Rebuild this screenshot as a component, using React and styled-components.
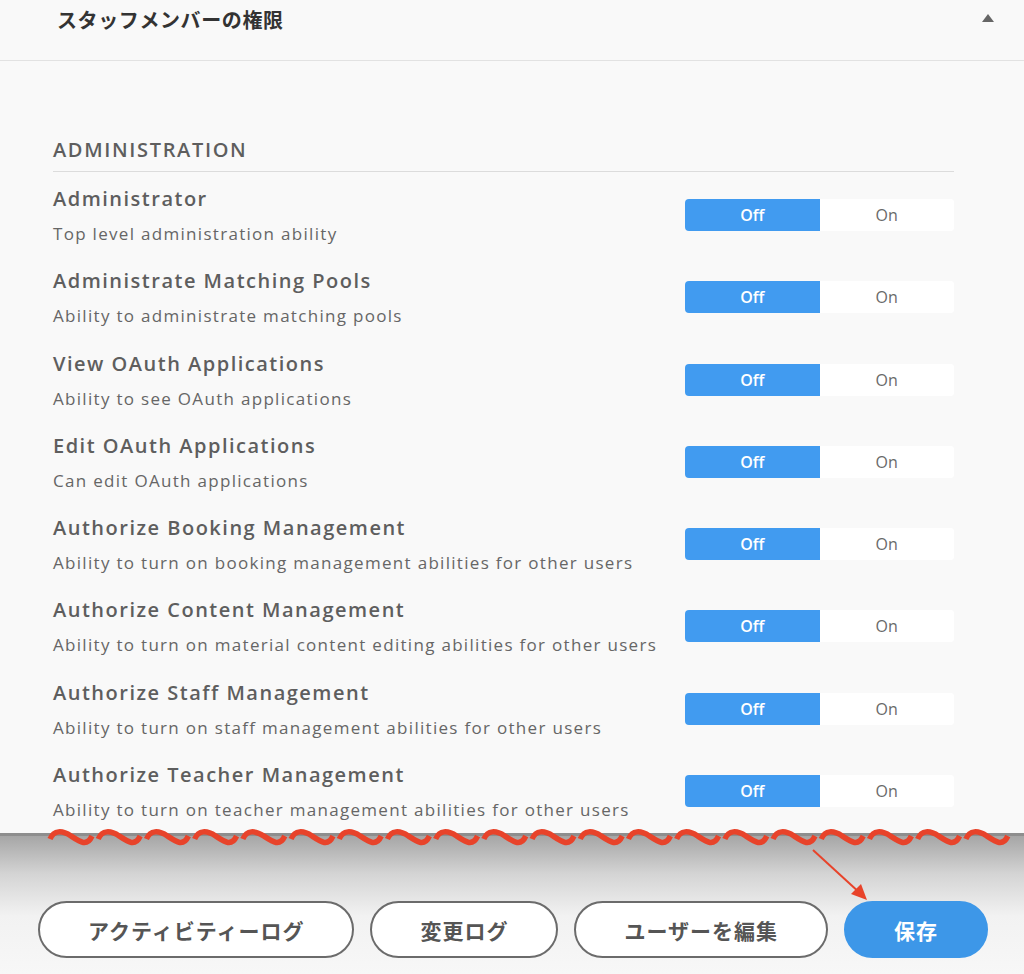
import React from "react";
import styled, { createGlobalStyle } from "styled-components";

const permissions = [
  ["Administrator", "Top level administration ability"],
  ["Administrate Matching Pools", "Ability to administrate matching pools"],
  ["View OAuth Applications", "Ability to see OAuth applications"],
  ["Edit OAuth Applications", "Can edit OAuth applications"],
  ["Authorize Booking Management", "Ability to turn on booking management abilities for other users"],
  ["Authorize Content Management", "Ability to turn on material content editing abilities for other users"],
  ["Authorize Staff Management", "Ability to turn on staff management abilities for other users"],
  ["Authorize Teacher Management", "Ability to turn on teacher management abilities for other users"],
];

function Wave() {
  const segs = [];
  for (let i = 0; i < 20; i++) {
    const x = 50 + i * 48.2;
    segs.push(
      <path
        key={i}
        d={`M${x} 2 C${x + 4} -7, ${x + 12} -7, ${x + 21} -1 S${x + 37} 10, ${x + 42} -1`}
      />
    );
  }
  return (
    <WaveSvg width="1024" height="20" viewBox="0 -10 1024 20">
      <g fill="none" stroke="#e8432a" strokeWidth="5.5" strokeLinecap="butt">
        {segs}
      </g>
    </WaveSvg>
  );
}

function Arrow() {
  return (
    <ArrowSvg width="70" height="70" viewBox="0 0 70 70">
      <line x1="2" y1="2" x2="50" y2="46" stroke="#e8432a" strokeWidth="2" />
      <polygon points="56,52 40,46 50,36" fill="#e8432a" />
    </ArrowSvg>
  );
}

function Toggle({ on }) {
  return (
    <ToggleBox>
      <ToggleHalf active={!on}>Off</ToggleHalf>
      <ToggleHalf active={on}>On</ToggleHalf>
    </ToggleBox>
  );
}

export default function App() {
  return (
    <>
      <GlobalStyle />
      <Panel>
        <Header>
          <HeaderTitle>スタッフメンバーの権限</HeaderTitle>
          <Caret />
        </Header>
        <Content>
          <SectionLabel>ADMINISTRATION</SectionLabel>
          {permissions.map(([title, desc]) => (
            <Row key={title}>
              <RowText>
                <RowTitle>{title}</RowTitle>
                <RowDesc>{desc}</RowDesc>
              </RowText>
              <Toggle on={false} />
            </Row>
          ))}
        </Content>
      </Panel>
      <Footer>
        <Wave />
        <Arrow />
        <ButtonBar>
          <OutlineButton>アクティビティーログ</OutlineButton>
          <OutlineButton>変更ログ</OutlineButton>
          <OutlineButton>ユーザーを編集</OutlineButton>
          <SaveButton>保存</SaveButton>
        </ButtonBar>
      </Footer>
    </>
  );
}

const GlobalStyle = createGlobalStyle`
  body {
    margin: 0;
    background: #f7f7f7;
    font-family: "Open Sans", "Noto Sans CJK JP", sans-serif;
  }
`;

const Panel = styled.div`
  background: #f9f9f9;
  border-bottom: 3px solid #8e8e8e;
  height: 836px;
  box-sizing: border-box;
`;

const Header = styled.div`
  height: 61px;
  box-sizing: border-box;
  border-bottom: 1px solid #e2e2e2;
  display: flex;
  justify-content: space-between;
  align-items: flex-start;
  padding: 6px 30px 0 57px;
`;

const HeaderTitle = styled.h2`
  margin: 0;
  font-family: "Noto Sans CJK JP", sans-serif;
  font-size: 20px;
  font-weight: 700;
  letter-spacing: 0.6px;
  line-height: 28px;
  color: #333;
`;

const Caret = styled.span`
  margin-top: 8px;
  width: 0;
  height: 0;
  border-left: 6px solid transparent;
  border-right: 6px solid transparent;
  border-bottom: 8px solid #666;
`;

const Content = styled.div`
  padding: 75px 70px 0 53px;
`;

const SectionLabel = styled.div`
  font-size: 20px;
  font-weight: 600;
  letter-spacing: 1.65px;
  color: #5e5e5e;
  line-height: 28px;
  padding-bottom: 7px;
  border-bottom: 1px solid #dcdcdc;
  margin-bottom: 13px;
`;

const Row = styled.div`
  display: flex;
  justify-content: space-between;
  align-items: flex-start;
  height: 82.3px;
  box-sizing: border-box;
`;

const RowText = styled.div`
  display: flex;
  flex-direction: column;
  gap: 8px;
`;

const RowTitle = styled.div`
  font-size: 20px;
  font-weight: 600;
  letter-spacing: 1.5px;
  line-height: 28px;
  color: #5e5e5e;
`;

const RowDesc = styled.div`
  font-size: 17px;
  letter-spacing: 1.3px;
  line-height: 26px;
  color: #666;
`;

const ToggleBox = styled.div`
  display: flex;
  width: 269px;
  height: 32px;
  margin-top: 14px;
  border-radius: 4px;
  overflow: hidden;
  background: #fff;
`;

const ToggleHalf = styled.div`
  flex: 1;
  display: flex;
  align-items: center;
  justify-content: center;
  font-size: 16px;
  font-weight: ${(p) => (p.active ? 600 : 500)};
  background: ${(p) => (p.active ? "#419bf0" : "#fff")};
  color: ${(p) => (p.active ? "#fff" : "#6a6a6a")};
`;

const Footer = styled.div`
  position: relative;
  height: 138px;
  background: linear-gradient(#a6a6a6 0px, #d4d4d4 38px, #f2f2f2 80px, #f7f7f7 100%);
  display: flex;
  flex-direction: column;
  justify-content: flex-end;
`;

const WaveSvg = styled.svg`
  position: absolute;
  left: 0;
  top: -9px;
`;

const ArrowSvg = styled.svg`
  position: absolute;
  left: 811px;
  top: 12px;
`;

const ButtonBar = styled.div`
  display: flex;
  gap: 16px;
  padding: 0 0 16px 38px;
`;

const BaseButton = styled.button`
  height: 57px;
  padding: 0 48px;
  border-radius: 30px;
  font-family: "Noto Sans CJK JP", sans-serif;
  font-size: 21px;
  font-weight: 700;
  letter-spacing: 1px;
  display: inline-flex;
  align-items: center;
  justify-content: center;
`;

const OutlineButton = styled(BaseButton)`
  background: #fff;
  border: 2px solid #6b6b6b;
  color: #555;
`;

const SaveButton = styled(BaseButton)`
  background: #3d97e8;
  border: 2px solid #3d97e8;
  color: #fff;
`;
